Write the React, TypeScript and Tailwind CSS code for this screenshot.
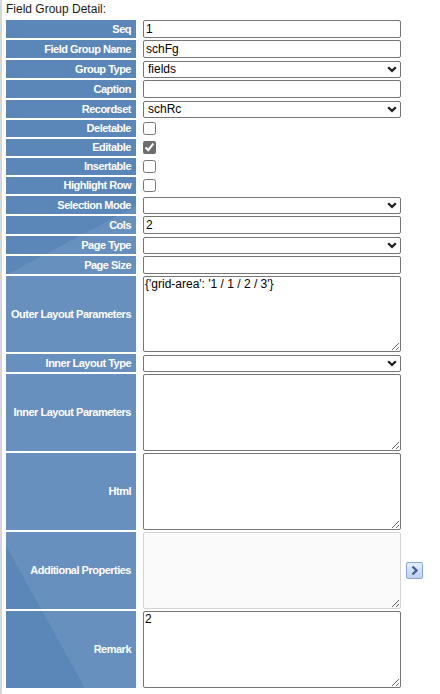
type Row = {
  label: string;
  kind: "text" | "select" | "check" | "area";
  value?: string;
  checked?: boolean;
  disabled?: boolean;
  tall?: boolean;
  button?: boolean;
};

const rows: Row[] = [
  { label: "Seq", kind: "text", value: "1" },
  { label: "Field Group Name", kind: "text", value: "schFg" },
  { label: "Group Type", kind: "select", value: "fields" },
  { label: "Caption", kind: "text", value: "" },
  { label: "Recordset", kind: "select", value: "schRc" },
  { label: "Deletable", kind: "check" },
  { label: "Editable", kind: "check", checked: true },
  { label: "Insertable", kind: "check" },
  { label: "Highlight Row", kind: "check" },
  { label: "Selection Mode", kind: "select", value: "" },
  { label: "Cols", kind: "text", value: "2" },
  { label: "Page Type", kind: "select", value: "" },
  { label: "Page Size", kind: "text", value: "" },
  { label: "Outer Layout Parameters", kind: "area", value: "{'grid-area': '1 / 1 / 2 / 3'}" },
  { label: "Inner Layout Type", kind: "select", value: "" },
  { label: "Inner Layout Parameters", kind: "area", value: "", tall: true },
  { label: "Html", kind: "area", value: "", tall: true },
  { label: "Additional Properties", kind: "area", value: "", disabled: true, tall: true, button: true },
  { label: "Remark", kind: "area", value: "2", tall: true },
];

function rowHeight(r: Row) {
  if (r.kind === "check") return "h-[17px]";
  if (r.kind === "area") return r.tall ? "h-[77px]" : "h-[76px]";
  return "h-[18px]";
}

function Field({ row }: { row: Row }) {
  if (row.kind === "text") {
    return (
      <input
        type="text"
        defaultValue={row.value}
        className="block h-[18px] w-[258px] rounded-[2px] border border-[#767676] bg-white px-[2px] text-[12px] leading-[14px] text-black outline-none"
      />
    );
  }

  if (row.kind === "select") {
    return (
      <div className="relative h-[17px] w-[258px]">
        <select
          defaultValue={row.value}
          className="block h-full w-full appearance-none rounded-[2px] border border-[#767676] bg-white pl-[4px] text-[12px] leading-[14px] text-black outline-none"
        >
          <option value={row.value}>{row.value}</option>
        </select>
        <svg
          className="pointer-events-none absolute right-[4px] top-[5px]"
          width="10"
          height="7"
          viewBox="0 0 10 7"
        >
          <path d="M1.2 1.2 L5 5 L8.8 1.2" fill="none" stroke="#1b1b1b" strokeWidth="2.2" />
        </svg>
      </div>
    );
  }

  if (row.kind === "check") {
    return (
      <input
        type="checkbox"
        defaultChecked={row.checked}
        className="m-0 block h-[13px] w-[13px] accent-[#6d6d6d]"
      />
    );
  }

  return (
    <textarea
      defaultValue={row.value}
      disabled={row.disabled}
      className={
        (row.tall ? "h-[77px] " : "h-[76px] ") +
        (row.disabled
          ? "border-[#d3d3d3] bg-[#fafafa] "
          : "border-[#767676] bg-white ") +
        "block w-[258px] resize-y rounded-[2px] border px-[1px] py-0 text-[12px] leading-[14px] text-black outline-none"
      }
    />
  );
}

function NextButton() {
  return (
    <button
      type="button"
      className="flex h-[17px] w-[17px] items-center justify-center rounded-[2px] border border-[#86a6d4] bg-[linear-gradient(#e3eefc,#bcd3f3)]"
    >
      <svg width="9" height="11" viewBox="0 0 9 11">
        <path d="M2.5 1.5 L6.5 5.5 L2.5 9.5" fill="none" stroke="#42639b" strokeWidth="2.4" />
      </svg>
    </button>
  );
}

export default function App() {
  return (
    <div className="min-h-screen border-l-2 border-[#d6d6d6] bg-white pl-[2px] font-['Liberation_Sans',Arial,sans-serif]">
      <div className="h-[18px] pl-[2px] pt-[2px] text-[12px] leading-[14px] text-[#1a1a1a]">
        Field Group Detail:
      </div>
      <table className="table-fixed border-separate border-spacing-[2px]">
        <colgroup>
          <col className="w-[130px]" />
          <col className="w-[263px]" />
          <col className="w-[20px]" />
        </colgroup>
        <tbody>
          {rows.map((row) => (
            <tr key={row.label}>
              <td
                className={
                  rowHeight(row) +
                  " whitespace-nowrap bg-[#6790be] bg-[linear-gradient(61deg,#5a86b8_10.7%,transparent_10.7%),linear-gradient(152deg,#5a86b8_30%,transparent_30%)] bg-fixed pl-[4px] pr-[5px] py-0 text-right align-middle text-[11px] font-bold leading-[13px] tracking-[-0.5px] text-white"
                }
              >
                {row.label}
              </td>
              <td className="py-0 pl-[5px] pr-0 align-middle">
                <Field row={row} />
              </td>
              <td className="py-0 pl-[3px] pr-0 align-middle">
                {row.button && <NextButton />}
              </td>
            </tr>
          ))}
        </tbody>
      </table>
    </div>
  );
}
